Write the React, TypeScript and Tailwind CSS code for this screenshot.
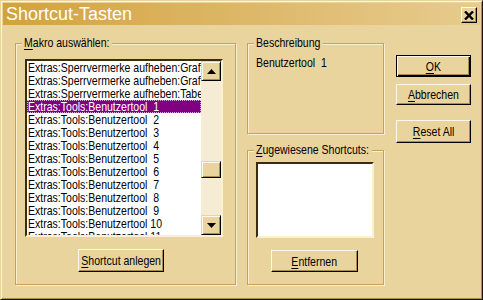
import React from "react";

const NF = "font-['Liberation_Sans',Arial,sans-serif]";

const items: string[] = [
  "Extras:Sperrvermerke aufheben:Grafiken",
  "Extras:Sperrvermerke aufheben:Grafikrahmen",
  "Extras:Sperrvermerke aufheben:Tabellen",
  "Extras:Tools:Benutzertool  1",
  "Extras:Tools:Benutzertool  2",
  "Extras:Tools:Benutzertool  3",
  "Extras:Tools:Benutzertool  4",
  "Extras:Tools:Benutzertool  5",
  "Extras:Tools:Benutzertool  6",
  "Extras:Tools:Benutzertool  7",
  "Extras:Tools:Benutzertool  8",
  "Extras:Tools:Benutzertool  9",
  "Extras:Tools:Benutzertool 10",
  "Extras:Tools:Benutzertool 11",
];

function T({ children, center }: { children: React.ReactNode; center?: boolean }) {
  return (
    <span
      className={`inline-block whitespace-pre scale-x-[0.81] ${center ? "origin-center" : "origin-left"}`}
    >
      {children}
    </span>
  );
}

function Group({
  label,
  labelW,
  className,
  children,
}: {
  label: React.ReactNode;
  labelW: string;
  className: string;
  children?: React.ReactNode;
}) {
  return (
    <div
      className={`relative border border-[#c6a258] shadow-[inset_1px_1px_0_#fbf1d2,1px_1px_0_#fbf1d2] ${className}`}
    >
      <div
        className={`absolute left-[6px] top-[-9px] overflow-hidden bg-[#ead49e] px-[2px] text-[13px] leading-[16px] text-black whitespace-nowrap ${NF} ${labelW}`}
      >
        <T>{label}</T>
      </div>
      {children}
    </div>
  );
}

function Btn({
  children,
  className,
  def,
}: {
  children: React.ReactNode;
  className: string;
  def?: boolean;
}) {
  return (
    <div
      className={`flex items-center justify-center bg-[#ead49e] text-[13px] leading-[15px] text-black whitespace-nowrap ${NF} ${
        def
          ? "border border-black shadow-[inset_1px_1px_0_#fffbea,inset_-1px_-1px_0_#000,inset_-2px_-2px_0_#a98d4f]"
          : "border border-t-[#fffbea] border-l-[#fffbea] border-r-black border-b-black shadow-[inset_-1px_-1px_0_#a98d4f]"
      } ${className}`}
    >
      <T center>{children}</T>
    </div>
  );
}

function ScrollBtn({ up }: { up?: boolean }) {
  return (
    <div className="flex h-[20px] w-[20px] items-center justify-center bg-[#ead49e] border border-t-[#ead49e] border-l-[#ead49e] border-r-black border-b-black shadow-[inset_1px_1px_0_#fffbea,inset_-1px_-1px_0_#a98d4f]">
      <svg width="9" height="5" viewBox="0 0 9 5">
        {up ? (
          <polygon points="0,5 9,5 4.5,0" fill="#000" />
        ) : (
          <polygon points="0,0 9,0 4.5,5" fill="#000" />
        )}
      </svg>
    </div>
  );
}

export default function App() {
  return (
    <div className="flex h-[300px] w-[483px] flex-col overflow-hidden border border-t-[#ead49e] border-l-[#ead49e] border-r-[#1c150a] border-b-[#1c150a] bg-[#ead49e] p-[2px] shadow-[inset_1px_1px_0_#fff8df,inset_-1px_-1px_0_#a98d4f]">
      {/* Title bar */}
      <div className="flex h-[22px] shrink-0 items-center justify-between bg-linear-to-r from-[#d3a23a] to-[#e7cc8e] pl-[3px] pr-[3px]">
        <span className="font-['Liberation_Sans',Arial,sans-serif] text-[18px] leading-[22px] text-white">
          Shortcut-Tasten
        </span>
        <div className="mt-[2px] flex h-[16px] w-[16px] items-center justify-center border border-t-[#fffbea] border-l-[#fffbea] border-r-black border-b-black bg-[#ead49e] shadow-[inset_-1px_-1px_0_#a98d4f]">
          <svg width="10" height="9" viewBox="0 0 10 9">
            <path d="M1 0.5 L9 8.5 M9 0.5 L1 8.5" stroke="#000" strokeWidth="2.4" />
          </svg>
        </div>
      </div>

      {/* Body */}
      <div className="flex flex-1 pl-[12px] pt-[18px]">
        {/* Left group */}
        <Group
          className="h-[242px] w-[221px] shrink-0 pl-[9px] pt-[15px]"
          labelW="w-[90px]"
          label={
            <>
              <u className="underline-offset-2">M</u>akro auswählen:
            </>
          }
        >
          <div className="flex h-[178px] w-[198px] border-2 border-t-[#3a2c10] border-l-[#3a2c10] border-r-[#fbf1d2] border-b-[#fbf1d2] bg-white">
            <div className="flex-1 overflow-hidden">
              {items.map((it, i) => (
                <div
                  key={i}
                  className={`h-[13px] overflow-hidden whitespace-pre pl-[1px] text-[13px] leading-[13px] ${NF} ${
                    i === 3
                      ? "bg-[#800080] text-white outline outline-1 outline-dotted -outline-offset-1 outline-[#d9a8d9]"
                      : "text-black"
                  }`}
                >
                  <T>{it}</T>
                </div>
              ))}
            </div>
            <div className="flex w-[20px] flex-col bg-[#f6ecd3]">
              <ScrollBtn up />
              <div className="flex-1">
                <div className="mt-[80px] h-[17px] w-[20px] border border-t-[#ead49e] border-l-[#ead49e] border-r-black border-b-black bg-[#ead49e] shadow-[inset_1px_1px_0_#fffbea,inset_-1px_-1px_0_#a98d4f]" />
              </div>
              <ScrollBtn />
            </div>
          </div>
          <Btn className="ml-[53px] mt-[12px] h-[23px] w-[86px]">
            <u className="underline-offset-2">S</u>hortcut anlegen
          </Btn>
        </Group>

        {/* Middle column */}
        <div className="ml-[11px] flex w-[137px] shrink-0 flex-col gap-[16px]">
          <Group className="h-[91px] pl-[8px] pt-[11px]" labelW="w-[69px]" label="Beschreibung">
            <div className={`whitespace-pre text-[13px] leading-[16px] text-black ${NF}`}>
              <T>Benutzertool  1</T>
            </div>
          </Group>
          <Group
            className="h-[135px] pl-[8px] pt-[11px]"
            labelW="w-[118px]"
            label={
              <>
                <u className="underline-offset-2">Z</u>ugewiesene Shortcuts:
              </>
            }
          >
            <div className="h-[76px] w-[118px] border-2 border-t-[#3a2c10] border-l-[#3a2c10] border-r-[#fbf1d2] border-b-[#fbf1d2] bg-white" />
            <Btn className="ml-[15px] mt-[12px] h-[22px] w-[87px]">
              <u className="underline-offset-2">E</u>ntfernen
            </Btn>
          </Group>
        </div>

        {/* Right column */}
        <div className="ml-[12px] flex w-[75px] shrink-0 flex-col pt-[12px]">
          <Btn def className="h-[22px] w-[75px]">
            <u className="underline-offset-2">O</u>K
          </Btn>
          <Btn className="mt-[7px] h-[21px] w-[75px]">
            <u className="underline-offset-2">A</u>bbrechen
          </Btn>
          <Btn className="mt-[15px] h-[23px] w-[75px]">
            <u className="underline-offset-2">R</u>eset All
          </Btn>
        </div>
      </div>
    </div>
  );
}
